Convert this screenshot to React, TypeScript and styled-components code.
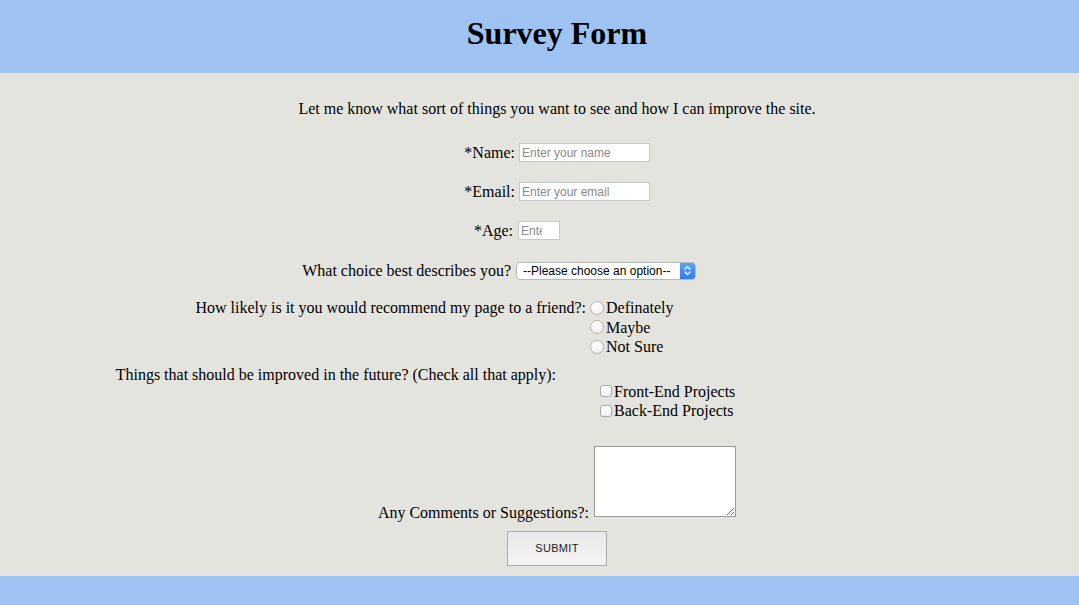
import styled, { createGlobalStyle } from 'styled-components';

const GlobalStyle = createGlobalStyle`
  html, body {
    margin: 0;
    padding: 0;
    background: #e4e4df;
    font-family: "Liberation Serif", "Times New Roman", serif;
    font-size: 16px;
    color: #000;
  }
`;

const Page = styled.div`
  display: flex;
  flex-direction: column;
  min-height: 605px;
`;

const Header = styled.header`
  box-sizing: border-box;
  height: 73px;
  padding: 0 0 6px 35px;
  background: #9ec2f2;
  display: flex;
  align-items: center;
  justify-content: center;
`;

const Title = styled.h1`
  margin: 0;
  font-size: 32px;
  font-weight: bold;
  line-height: 37px;
`;

const Form = styled.form`
  display: flex;
  flex-direction: column;
  padding-top: 26px;
  padding-bottom: 10px;
`;

const Intro = styled.p`
  margin: 0;
  padding-left: 35px;
  text-align: center;
  line-height: 19px;
`;

const Row = styled.div<{ $top: number; $align?: string }>`
  display: flex;
  align-items: ${p => p.$align || 'center'};
  margin-top: ${p => p.$top}px;
`;

const Label = styled.label<{ $end: number; $gap?: number; $drop?: number }>`
  width: ${p => p.$end}px;
  flex-shrink: 0;
  text-align: right;
  line-height: 19px;
  margin-right: ${p => p.$gap ?? 4}px;
  margin-bottom: ${p => -(p.$drop ?? 0)}px;
  white-space: nowrap;
`;

const TextInput = styled.input<{ $w: number }>`
  box-sizing: border-box;
  width: ${p => p.$w}px;
  height: 19px;
  padding: 0 2px;
  border: 1px solid #c9c9c9;
  background: #fff;
  font-family: "Liberation Sans", Arial, sans-serif;
  font-size: 12px;
  outline: none;
  &::placeholder {
    color: #8a8a8a;
  }
`;

const SelectBox = styled.div`
  box-sizing: border-box;
  display: inline-flex;
  width: 180px;
  height: 18px;
  border: 1px solid #b9b9b9;
  border-radius: 4px;
  overflow: hidden;
  background: #fff;
`;

const Select = styled.select`
  appearance: none;
  flex: 1;
  border: none;
  background: transparent;
  padding: 0 0 0 6px;
  font-family: "Liberation Sans", Arial, sans-serif;
  font-size: 12px;
  color: #000;
  outline: none;
`;

const Stepper = styled.span`
  width: 15px;
  display: flex;
  align-items: center;
  justify-content: center;
  background: linear-gradient(#5aa0fb, #2f7cf0);
`;

const Options = styled.div<{ $top?: number; $left?: number }>`
  display: flex;
  flex-direction: column;
  margin-top: ${p => p.$top ?? 0}px;
  margin-left: ${p => p.$left ?? 0}px;
`;

const Option = styled.label`
  display: flex;
  align-items: center;
  height: 19.5px;
  line-height: 19px;
`;

const Radio = styled.input`
  appearance: none;
  box-sizing: border-box;
  width: 14px;
  height: 14px;
  margin: 0 2px 0 0;
  border: 1px solid #b3b3b3;
  border-radius: 50%;
  background: linear-gradient(#fff, #f1f1f1);
`;

const Check = styled.input`
  appearance: none;
  box-sizing: border-box;
  width: 12px;
  height: 12px;
  margin: 0 2px 0 0;
  border: 1px solid #a9a9a9;
  border-radius: 3px;
  background: linear-gradient(#fff, #f1f1f1);
`;

const TextArea = styled.textarea`
  box-sizing: border-box;
  width: 142px;
  height: 71px;
  margin: 0;
  border: 1px solid #9a9a9a;
  background: #fff;
`;

const SubmitButton = styled.button`
  box-sizing: border-box;
  width: 100px;
  height: 35px;
  margin: 14px 0 0 507px;
  border: 1px solid #ababab;
  background: linear-gradient(#e8e8e8, #f4f4f4);
  font-family: "Liberation Sans", Arial, sans-serif;
  font-size: 11px;
  letter-spacing: 0.3px;
  color: #222;
  cursor: pointer;
`;

const Footer = styled.footer`
  flex: 1;
  min-height: 29px;
  background: #9ec2f2;
`;

export default function App() {
  return (
    <Page>
      <GlobalStyle />
      <Header>
        <Title>Survey Form</Title>
      </Header>
      <Form onSubmit={e => e.preventDefault()}>
        <Intro>Let me know what sort of things you want to see and how I can improve the site.</Intro>

        <Row $top={25}>
          <Label $end={515}>*Name:</Label>
          <TextInput $w={131} type="text" placeholder="Enter your name" />
        </Row>
        <Row $top={20}>
          <Label $end={515}>*Email:</Label>
          <TextInput $w={131} type="email" placeholder="Enter your email" />
        </Row>
        <Row $top={20}>
          <Label $end={513} $gap={5}>*Age:</Label>
          <TextInput $w={42} type="number" placeholder="Enter" />
        </Row>
        <Row $top={21}>
          <Label $end={511} $gap={5}>What choice best describes you?</Label>
          <SelectBox>
            <Select defaultValue="">
              <option value="">--Please choose an option--</option>
              <option value="student">Student</option>
              <option value="dev">Developer</option>
            </Select>
            <Stepper>
              <svg width="7" height="11" viewBox="0 0 7 11" fill="none" stroke="#fff" strokeWidth="1.3" strokeLinecap="round" strokeLinejoin="round">
                <path d="M1 4 L3.5 1.5 L6 4" />
                <path d="M1 7 L3.5 9.5 L6 7" />
              </svg>
            </Stepper>
          </SelectBox>
        </Row>

        <Row $top={18} $align="flex-start">
          <Label $end={586}>How likely is it you would recommend my page to a friend?:</Label>
          <Options>
            <Option><Radio type="radio" name="rec" />Definately</Option>
            <Option><Radio type="radio" name="rec" />Maybe</Option>
            <Option><Radio type="radio" name="rec" />Not Sure</Option>
          </Options>
        </Row>

        <Row $top={8} $align="flex-start">
          <Label $end={556} $gap={0}>Things that should be improved in the future? (Check all that apply):</Label>
          <Options $top={17} $left={44}>
            <Option><Check type="checkbox" />Front-End Projects</Option>
            <Option><Check type="checkbox" />Back-End Projects</Option>
          </Options>
        </Row>

        <Row $top={25} $align="flex-end">
          <Label $end={589} $gap={5} $drop={5}>Any Comments or Suggestions?:</Label>
          <TextArea />
        </Row>

        <div>
          <SubmitButton type="submit">SUBMIT</SubmitButton>
        </div>
      </Form>
      <Footer />
    </Page>
  );
}
